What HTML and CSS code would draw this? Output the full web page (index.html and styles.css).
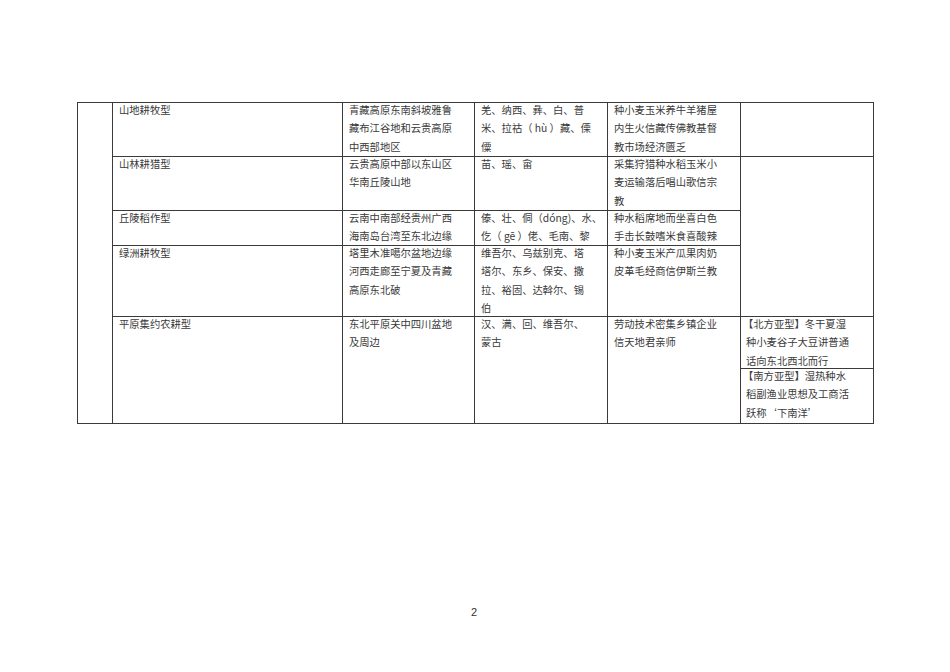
FILE: index.html
```html
<!DOCTYPE html>
<html lang="zh-CN">
<head>
<meta charset="utf-8">
<title>农业类型</title>
<link rel="stylesheet" href="styles.css">
</head>
<body>
<div class="page">
  <div class="grid">
    <div class="cell c1"></div>

    <div class="cell r1"><div class="t">山地耕牧型</div></div>
    <div class="cell r1"><div class="t">青藏高原东南斜坡雅鲁<br>藏布江谷地和云贵高原<br>中西部地区</div></div>
    <div class="cell r1"><div class="t">羌、纳西、彝、白、普<br>米、拉祜（ hù ）藏、傈<br>僳</div></div>
    <div class="cell r1"><div class="t">种小麦玉米养牛羊猪屋<br>内生火信藏传佛教基督<br>教市场经济匮乏</div></div>
    <div class="cell r1"><div class="t"></div></div>

    <div class="cell r2"><div class="t">山林耕猎型</div></div>
    <div class="cell r2"><div class="t">云贵高原中部以东山区<br>华南丘陵山地</div></div>
    <div class="cell r2"><div class="t">苗、瑶、畲</div></div>
    <div class="cell r2"><div class="t">采集狩猎种水稻玉米小<br>麦运输落后唱山歌信宗<br>教</div></div>
    <div class="cell r2to4"><div class="t"></div></div>

    <div class="cell r3"><div class="t">丘陵稻作型</div></div>
    <div class="cell r3"><div class="t">云南中南部经贵州广西<br>海南岛台湾至东北边缘</div></div>
    <div class="cell r3"><div class="t">傣、壮、侗（dóng)、水、<br>仡（ gē ）佬、毛南、黎</div></div>
    <div class="cell r3"><div class="t">种水稻席地而坐喜白色<br>手击长鼓嗜米食喜酸辣</div></div>

    <div class="cell r4"><div class="t">绿洲耕牧型</div></div>
    <div class="cell r4"><div class="t">塔里木准噶尔盆地边缘<br>河西走廊至宁夏及青藏<br>高原东北破</div></div>
    <div class="cell r4"><div class="t">维吾尔、乌兹别克、塔<br>塔尔、东乡、保安、撒<br>拉、裕固、达斡尔、锡<br>伯</div></div>
    <div class="cell r4"><div class="t">种小麦玉米产瓜果肉奶<br>皮革毛经商信伊斯兰教</div></div>

    <div class="cell r5"><div class="t">平原集约农耕型</div></div>
    <div class="cell r5"><div class="t">东北平原关中四川盆地<br>及周边</div></div>
    <div class="cell r5"><div class="t">汉、满、回、维吾尔、<br>蒙古</div></div>
    <div class="cell r5"><div class="t">劳动技术密集乡镇企业<br>信天地君亲师</div></div>
    <div class="cell r5a"><div class="t"><span class="lb">【北方亚型】</span>冬干夏湿<br>种小麦谷子大豆讲普通<br>话向东北西北而行</div></div>
    <div class="cell r5b"><div class="t"><span class="lb">【南方亚型】</span>湿热种水<br>稻副渔业思想及工商活<br>跃称‘下南洋’</div></div>
  </div>
  <div class="pageno">2</div>
</div>
</body>
</html>
```

FILE: styles.css
```css
html, body {
  margin: 0;
  padding: 0;
  background: #ffffff;
}

.page {
  width: 950px;
  height: 672px;
  padding-top: 102px;
  box-sizing: border-box;
  font-family: "Noto Sans CJK SC", "Noto Sans", sans-serif;
  color: #3a3a3a;
}

.grid {
  margin-left: 77px;
  width: 797px;
  box-sizing: border-box;
  display: grid;
  grid-template-columns: 34px 229px 131px 132px 132px 132px;
  grid-template-rows: 53px 53px 34px 70px 51px 54px;
  gap: 1px;
  padding: 1px;
  background: #3a3a3a;
}

.cell {
  background: #ffffff;
  padding: 0 6px;
  font-size: 10.3px;
  line-height: 18.3px;
  white-space: nowrap;
  overflow: visible;
}

.t {
  margin-top: -2px;
}

.c1 { grid-column: 1; grid-row: 1 / 7; }
.r1 { grid-row: 1; }
.r2 { grid-row: 2; }
.r2to4 { grid-row: 2 / 5; grid-column: 6; }
.r3 { grid-row: 3; }
.r4 { grid-row: 4; }
.r5 { grid-row: 5 / 7; }
.r5a { grid-row: 5; grid-column: 6; padding-left: 5px; }
.r5b { grid-row: 6; grid-column: 6; padding-left: 5px; }

.lb {
  margin-left: -3px;
}

.pageno {
  margin-top: 182px;
  text-align: center;
  font-family: "Liberation Sans", Arial, sans-serif;
  font-size: 11px;
  color: #333;
  padding-right: 2px;
}
```
